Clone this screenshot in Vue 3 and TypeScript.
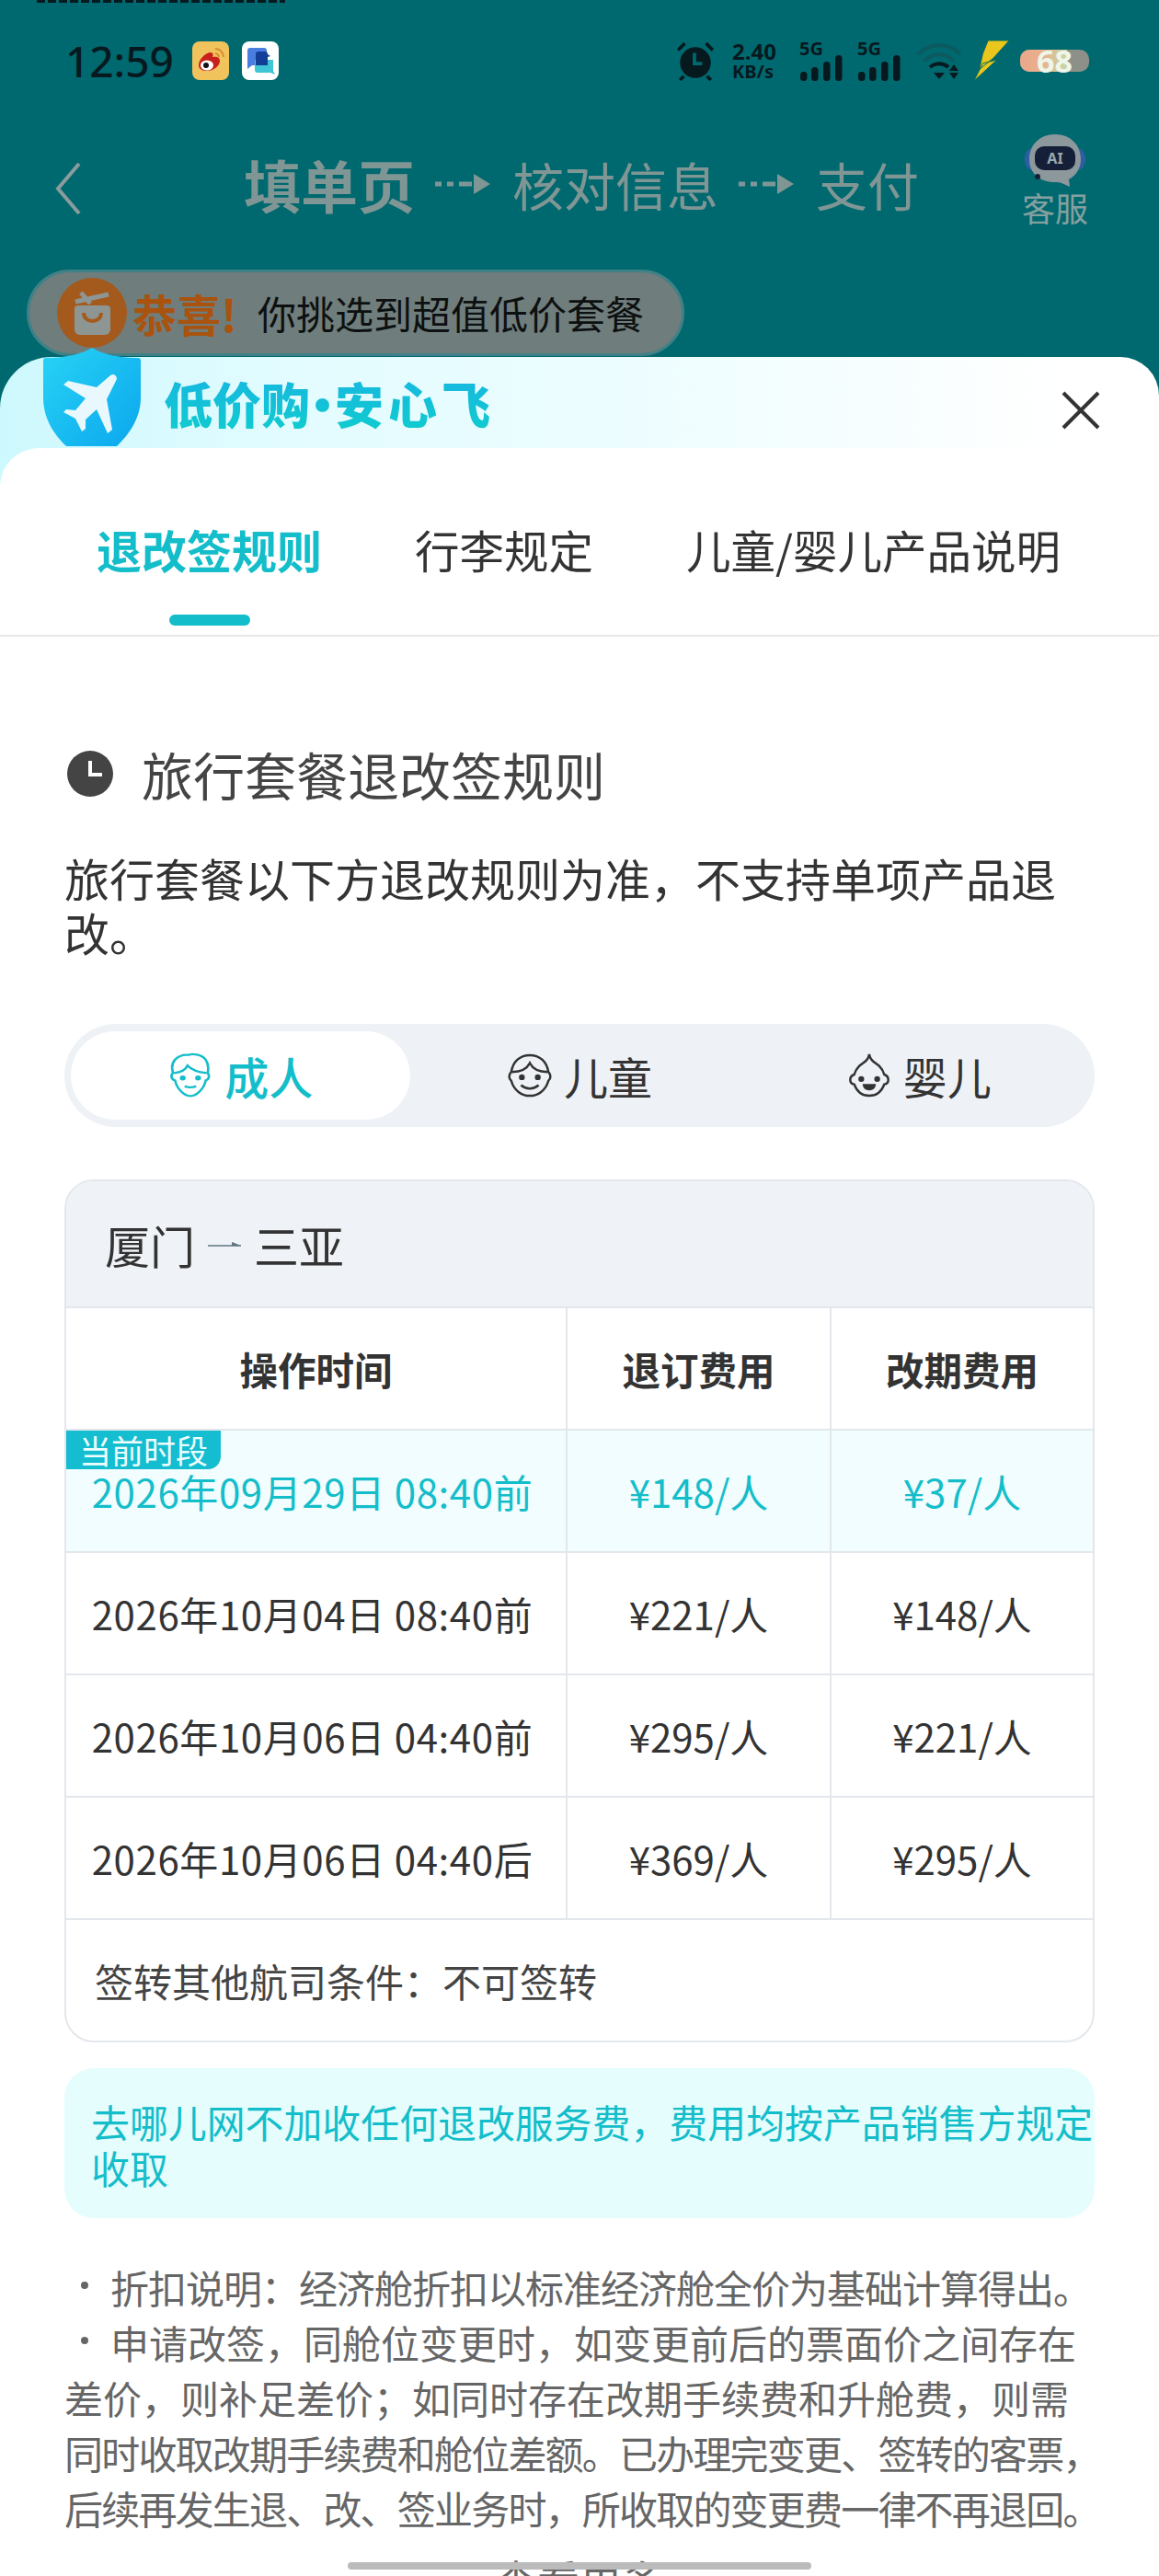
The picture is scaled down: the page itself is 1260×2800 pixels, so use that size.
<template>
  <div class="page">
    <div class="dim">
      <div class="sliver"></div>
      <div class="status">
        <span class="clock">12:59</span>
        <svg class="app-icon" viewBox="0 0 40 42">
          <rect width="40" height="42" rx="8" fill="#f0c35c" />
          <path d="M7 26c0-7 8-14 13-14 3 0 3 3 2 5 4-1 8 0 8 4 0 6-7 11-14 11-5 0-9-2-9-6z" fill="#c8201c" />
          <ellipse cx="16" cy="26" rx="7" ry="5.5" fill="#fff" />
          <circle cx="15" cy="26" r="3" fill="#111" />
          <path d="M25 8c5 0 9 4 9 9M25 13c2 0 4 2 4 4" fill="none" stroke="#d98a2c" stroke-width="2" />
        </svg>
        <svg class="app-icon" viewBox="0 0 40 42">
          <rect width="40" height="42" rx="8" fill="#fff" />
          <path d="M6 10a3 3 0 0 1 3-3h15a3 3 0 0 1 3 3v16H11l-5 4z" fill="#4a7de0" />
          <path d="M14 20h20v12l2 4-5-2H17a3 3 0 0 1-3-3z" fill="#3fc6d4" />
          <path d="M15 14a3 3 0 0 1 3-3h7a3 3 0 0 1 3 3l3 2-3 1v9H15z" fill="#123f95" />
        </svg>
        <div class="status-right">
          <svg class="alarm" viewBox="0 0 42 42">
            <path d="M3 10l7-7M39 10l-7-7M9 37l-4 4M33 37l4 4" stroke="#06191f" stroke-width="3.5" fill="none" />
            <circle cx="21" cy="23" r="16" fill="#06191f" />
            <path d="M20 13v11h8" stroke="#00696f" stroke-width="3.5" fill="none" />
          </svg>
          <div class="speed"><span>2.40</span><span class="unit">KB/s</span></div>
          <div v-for="sim in 2" :key="sim" class="signal">
            <span class="five-g">5G</span>
            <svg viewBox="0 0 50 28">
              <rect x="1" y="18" width="7.5" height="10" rx="3.5" />
              <rect x="13" y="13" width="7.5" height="15" rx="3.5" />
              <rect x="26" y="7" width="7.5" height="21" rx="3.5" />
              <rect x="39" y="0" width="7.5" height="28" rx="3.5" />
            </svg>
          </div>
          <svg class="wifi" viewBox="0 0 54 42">
            <path d="M3 14c13-13 33-13 46 0M10 21c9-9 23-9 32 0" fill="none" stroke="#0a5a60" stroke-width="4" />
            <path d="M16 28c6-5 14-5 20 0" fill="none" stroke="#06191f" stroke-width="4" />
            <path d="M20 34h12l-6 7z" fill="#06191f" />
            <path d="M42 25l5 7H37zM37 34h10l-5 7z" fill="#06191f" />
          </svg>
          <svg class="bolt" viewBox="0 0 40 46">
            <path d="M16 0h24L22 20l-16 13 4-18zM10 26l16-4L0 46z" fill="#e9c71c" stroke="#0a6a5e" stroke-width="1" />
          </svg>
          <div class="battery"><span class="battery-level"></span><span class="battery-num">68</span></div>
        </div>
      </div>

      <div class="nav">
        <svg class="back" viewBox="0 0 30 58">
          <polyline points="27,2 4,29 27,56" fill="none" stroke="#8b9c9c" stroke-width="4" />
        </svg>
        <div class="steps">
          <span class="step-main">填单页</span>
          <svg class="flow" viewBox="0 0 62 24">
            <path d="M0 12h7M13 12h7M26 12h14" stroke="#7f9695" stroke-width="5" />
            <path d="M42 1l18 11-18 11z" fill="#7f9695" />
          </svg>
          <span class="step">核对信息</span>
          <svg class="flow" viewBox="0 0 62 24">
            <path d="M0 12h7M13 12h7M26 12h14" stroke="#7f9695" stroke-width="5" />
            <path d="M42 1l18 11-18 11z" fill="#7f9695" />
          </svg>
          <span class="step">支付</span>
        </div>
        <div class="service">
          <svg viewBox="0 0 68 58">
            <path d="M1 28c0-6 3-11 7-12v24c-4-1-7-6-7-12zM67 28c0-6-3-11-7-12v24c4-1 7-6 7-12z" fill="#2f5da3" />
            <path d="M34 1C17 1 6 13 6 28s11 25 28 25c3 0 5 0 7 1l9 4-1-8c9-5 13-13 13-22C62 13 51 1 34 1z" fill="#8d989c" />
            <rect x="12" y="14" width="44" height="26" rx="10" fill="#152038" />
            <text x="34" y="33" text-anchor="middle" class="ai-text">AI</text>
            <circle cx="15" cy="47" r="3" fill="#152038" />
          </svg>
          <span>客服</span>
        </div>
      </div>

      <div class="promo">
        <svg class="promo-icon" viewBox="0 0 76 76">
          <circle cx="38" cy="38" r="38" fill="#a45a1d" />
          <path d="M19 34a4 4 0 0 1 4-4h31a4 4 0 0 1 4 4v22a6 6 0 0 1-6 6H25a6 6 0 0 1-6-6z" fill="#8e9694" />
          <path d="M20 26l36-8M26 16l10 12" stroke="#8e9694" stroke-width="5" fill="none" />
          <path d="M29 38c0 12 19 12 19 0" stroke="#a45a1d" stroke-width="4" fill="none" />
        </svg>
        <span class="promo-hi">恭喜!</span>
        <span class="promo-text">你挑选到超值低价套餐</span>
      </div>
    </div>

    <div class="sheet">
      <svg class="shield" viewBox="0 0 106 107">
        <defs>
          <linearGradient id="shieldFill" x1="0" y1="0" x2="1" y2="1">
            <stop offset="0" stop-color="#27d3f4" />
            <stop offset="1" stop-color="#0aa5ee" />
          </linearGradient>
        </defs>
        <path d="M53 0c12 7 28 11 50 11 2 0 3 1 3 3v40c0 30-22 50-36 62H36C20 104 0 84 0 54V14c0-2 1-3 3-3C25 11 41 7 53 0z" fill="url(#shieldFill)" />
        <path d="M79 36c3-4-2-9-6-6L58 43 27 36l-5 4 24 15-11 13-10-1-3 3 13 7 7 14 4-3v-10l12-11 12 26 5-4-6-33z" fill="#e9f8fd" />
      </svg>
      <div class="sheet-head">
        <span class="brand">低价购<span class="brand-dot">·</span><span class="brand-end">安心飞</span></span>
        <svg class="close" viewBox="0 0 42 42">
          <path d="M2 2l38 38M40 2L2 40" stroke="#333" stroke-width="4" fill="none" />
        </svg>
      </div>

      <div class="sheet-body">
        <div class="tabs">
          <div v-for="tab in tabs" :key="tab" :class="['tab', { active: tab === '退改签规则' }]">
            <span>{{ tab }}</span>
            <i></i>
          </div>
        </div>

        <div class="content">
          <h2 class="heading">
            <svg viewBox="0 0 50 50">
              <circle cx="25" cy="25" r="25" fill="#444" />
              <path d="M25 11v15h13" fill="none" stroke="#fff" stroke-width="4" />
            </svg>
            旅行套餐退改签规则
          </h2>
          <p class="lead">旅行套餐以下方退改规则为准，不支持单项产品退改。</p>

          <div class="segment">
            <div class="seg active">
              <svg viewBox="0 0 48 56" preserveAspectRatio="none" fill="none" stroke="currentColor" stroke-width="2.6">
                <path d="M6 25C2 12 10 2 22 3c4-2 14-1 18 6 3 5 3 11 2 16 2 2 2 8-2 9-2 11-10 19-16 19S10 45 8 34c-4-1-5-7-2-9z" />
                <path d="M7 25c8-1 12-4 14-9 4 5 11 8 20 9" />
                <circle cx="16" cy="31" r="1.8" fill="currentColor" />
                <circle cx="32" cy="31" r="1.8" fill="currentColor" />
                <path d="M18 41c4 2 8 2 12 0" />
              </svg>
              <span>成人</span>
            </div>
            <div class="seg">
              <svg viewBox="0 0 52 52" fill="none" stroke="currentColor" stroke-width="2.6">
                <path d="M5 22C7 10 15 3 26 3s19 7 21 19c3 3 3 8 0 10-3 11-12 17-21 17S8 43 5 32c-3-2-3-7 0-10z" />
                <path d="M6 22c10 0 17-4 20-10 3 6 10 10 20 10" />
                <circle cx="17" cy="28" r="2" fill="currentColor" />
                <circle cx="35" cy="28" r="2" fill="currentColor" />
                <path d="M16 37c6 5 14 5 20 0" />
              </svg>
              <span>儿童</span>
            </div>
            <div class="seg">
              <svg viewBox="0 0 52 52" fill="none" stroke="currentColor" stroke-width="2.6">
                <path d="M26 2c1 7 6 9 11 13 3 3 5 6 6 10 6 2 6 10 0 11-3 8-9 13-17 13S12 44 9 36c-6-1-6-9 0-11 1-4 3-7 6-10 5-4 10-6 11-13z" />
                <circle cx="17" cy="30" r="2" fill="currentColor" />
                <circle cx="35" cy="30" r="2" fill="currentColor" />
                <path d="M20 37h12c-1 6-11 6-12 0z" fill="currentColor" />
              </svg>
              <span>婴儿</span>
            </div>
          </div>

          <div class="table">
            <div class="route">
              厦门
              <svg viewBox="0 0 36 10">
                <path d="M0 5h36" stroke="#5f7480" stroke-width="1.5" />
                <path d="M26 1l10 4H26z" fill="#5f7480" />
              </svg>
              三亚
            </div>
            <div class="row head">
              <div>操作时间</div>
              <div>退订费用</div>
              <div>改期费用</div>
            </div>
            <div v-for="(row, i) in rows" :key="row.time" :class="['row', { current: i === 0 }]">
              <div class="time-cell">
                <span v-if="i === 0" class="tag">当前时段</span>
                <span>{{ row.time }}</span>
              </div>
              <div>{{ row.refund }}</div>
              <div>{{ row.change }}</div>
            </div>
            <div class="endorse">签转其他航司条件：不可签转</div>
          </div>

          <div class="note">去哪儿网不加收任何退改服务费，费用均按产品销售方规定收取</div>

          <div class="rules">
            <p class="bullet narrow">折扣说明：经济舱折扣以标准经济舱全价为基础计算得出。</p>
            <p class="bullet">申请改签，同舱位变更时，如变更前后的票面价之间存在</p>
            <p>差价，则补足差价；如同时存在改期手续费和升舱费，则需</p>
            <p class="tight">同时收取改期手续费和舱位差额。已办理完变更、签转的客票，</p>
            <p class="tight">后续再发生退、改、签业务时，所收取的变更费一律不再退回。</p>
          </div>
          <div class="more">查看更多</div>
        </div>
      </div>
    </div>
    <div class="scrollbar"></div>
  </div>
</template>

<script setup lang="ts">
const tabs: string[] = ['退改签规则', '行李规定', '儿童/婴儿产品说明']

const rows: { time: string; refund: string; change: string }[] = [
  { time: '2026年09月29日 08:40前', refund: '¥148/人', change: '¥37/人' },
  { time: '2026年10月04日 08:40前', refund: '¥221/人', change: '¥148/人' },
  { time: '2026年10月06日 04:40前', refund: '¥295/人', change: '¥221/人' },
  { time: '2026年10月06日 04:40后', refund: '¥369/人', change: '¥295/人' },
]
</script>

<style>
html, body { margin: 0; background: #fff; }
</style>

<style scoped>
.page { position: relative; width: 1260px; height: 2800px; overflow: hidden; background: #00696f; font-family: "Noto Sans CJK SC", "Noto Sans", sans-serif; color: #333; }
.dim { height: 388px; display: flex; flex-direction: column; }
.sliver { height: 3px; margin-left: 40px; flex: none; width: 270px; background: repeating-linear-gradient(90deg, #06191f 0 9px, transparent 9px 12px); }
.status { display: flex; align-items: center; height: 126px; flex: none; padding-left: 71px; }
.clock { font-family: "Noto Sans", sans-serif; font-weight: 500; font-size: 46px; color: #06191f; width: 138px; line-height: 1; }
.app-icon { width: 40px; height: 42px; margin-right: 14px; }
.status-right { margin-left: auto; padding-right: 76px; display: flex; align-items: center; height: 44px; }
.alarm { width: 44px; height: 44px; margin-right: 18px; }
.speed { display: flex; flex-direction: column; font-family: "Noto Sans", sans-serif; font-weight: 700; color: #06191f; font-size: 24px; line-height: 24px; width: 56px; margin-right: 17px; }
.speed .unit { font-size: 20px; line-height: 20px; }
.signal { position: relative; width: 50px; height: 44px; margin-right: 13px; }
.signal svg { position: absolute; left: 0; bottom: 0; width: 50px; height: 28px; fill: #06191f; }
.five-g { position: absolute; left: 0; top: -1px; font-family: "Noto Sans", sans-serif; font-size: 20px; line-height: 20px; font-weight: 700; color: #06191f; }
.wifi { width: 54px; height: 42px; margin-right: 9px; }
.bolt { width: 40px; height: 44px; margin-right: 11px; }
.battery { position: relative; width: 75px; height: 24px; border-radius: 10px; background: #8d9088; display: flex; justify-content: center; align-items: center; }
.battery-level { position: absolute; left: 0; top: 0; bottom: 0; width: 51px; border-radius: 10px 0 0 10px; background: linear-gradient(90deg, #eba78c, #e9b08c 45%, #c7d6a5); }
.battery-num { position: relative; font-family: "Noto Sans", sans-serif; font-size: 34px; font-weight: 700; color: #eef6ea; line-height: 24px; }

.nav { position: relative; flex: none; height: 130px; display: flex; align-items: center; justify-content: center; }
.back { position: absolute; left: 59px; top: 47px; width: 30px; height: 58px; }
.steps { display: flex; align-items: center; gap: 22px; margin-top: 12px; color: #7f9695; transform: translateX(2px); }
.step-main { font-size: 62px; font-weight: 700; line-height: 70px; }
.step { font-size: 56px; line-height: 70px; }
.flow { width: 62px; height: 24px; }
.service { position: absolute; right: 77px; top: 16px; width: 72px; display: flex; flex-direction: column; align-items: center; color: #84a0a0; font-size: 36px; line-height: 44px; }
.service svg { width: 68px; height: 58px; flex: none; }
.ai-text { font-family: "Noto Sans", sans-serif; font-size: 16px; font-weight: 700; fill: #9aa7ad; }

.promo { flex: none; box-sizing: border-box; width: 715px; height: 94px; margin: 34px 0 0 29px; display: flex; align-items: center; padding-left: 30px; border-radius: 47px; background: #6f7d7c; border: 3px solid #3f8186; }
.promo-icon { width: 76px; height: 76px; flex: none; margin-right: 6px; }
.promo-hi { color: #a9530f; font-size: 48px; font-weight: 700; width: 136px; line-height: 60px; white-space: nowrap; }
.promo-text { color: #0d1010; font-size: 42px; line-height: 60px; white-space: nowrap; }

.sheet { position: relative; height: 2412px; border-radius: 56px 42px 0 0; background: linear-gradient(90deg, #cdf8fd 0%, #e3fcff 25%, #edfdff 55%, #fff 92%); }
.shield { position: absolute; left: 47px; top: -10px; width: 106px; height: 107px; }
.sheet-head { height: 99px; position: relative; display: flex; align-items: center; justify-content: space-between; padding: 0 64px 0 178px; box-sizing: border-box; }
.brand { font-size: 53px; font-weight: 900; line-height: 60px; background: linear-gradient(180deg, #17b7e0, #10cbcf); -webkit-background-clip: text; background-clip: text; color: transparent; white-space: nowrap; }
.brand-dot { margin: 0 -13px; }
.brand-end { letter-spacing: 5px; }
.close { width: 42px; height: 42px; margin-top: 16px; }
.sheet-body { height: 2313px; background: #fff; border-radius: 42px 0 0 0; overflow: hidden; }

.tabs { display: flex; gap: 101px; height: 205px; box-sizing: border-box; padding: 80px 0 0 105px; border-bottom: 2px solid #e8e8e8; }
.tab { display: flex; flex-direction: column; align-items: center; font-size: 48.5px; line-height: 60px; color: #333; white-space: nowrap; }
.tab i { display: block; width: 88px; height: 12px; margin-top: 41px; border-radius: 6px; }
.tab.active { color: #14bdca; font-weight: 700; font-size: 49px; }
.tab.active i { background: #14bdca; }

.content { padding: 0 70px; }
.heading { margin: 118px 0 0 3px; display: flex; align-items: center; gap: 31px; font-size: 56px; line-height: 62px; font-weight: 400; color: #444; white-space: nowrap; }
.heading svg { width: 50px; height: 50px; flex: none; }
.lead { margin: 52px 0 0; font-size: 49px; line-height: 59px; color: #333; }

.segment { margin-top: 71px; height: 112px; box-sizing: border-box; padding: 8px 7px; border-radius: 56px; background: #eef1f5; display: grid; grid-template-columns: repeat(3, 1fr); }
.seg { display: flex; align-items: center; justify-content: center; gap: 12px; font-size: 48px; line-height: 60px; color: #333; border-radius: 48px; }
.seg svg { width: 50px; height: 50px; }
.seg.active { background: #fff; color: #14bdca; font-weight: 500; }

.table { margin-top: 57px; box-sizing: border-box; height: 938px; border: 2px solid #e3e7ec; border-radius: 32px; overflow: hidden; }
.route { height: 138px; box-sizing: border-box; border-bottom: 2px solid #e3e7ec; background: #eff2f6; display: flex; align-items: center; padding-left: 42px; gap: 14px; font-size: 49px; color: #333; }
.route svg { width: 36px; height: 10px; margin-top: 4px; }
.row { display: grid; grid-template-columns: 545px 287px 1fr; height: 133px; border-bottom: 2px solid #e3e7ec; box-sizing: border-box; font-size: 42px; }
.row > div { display: flex; align-items: center; justify-content: center; white-space: pre; border-right: 2px solid #e3e7ec; }
.row > div:last-child { border-right: 0; }
.row.head { font-weight: 700; font-size: 41.5px; }
.row.current { background: #f1fdfe; color: #14bdca; }
.time-cell { position: relative; letter-spacing: 0.6px; padding-right: 8px; }
.tag { position: absolute; left: 0; top: 0; width: 168px; height: 42px; border-radius: 0 0 14px 0; background: #14bdd0; color: #eefdfe; font-size: 35px; line-height: 42px; text-align: center; letter-spacing: 0; }
.endorse { height: 130px; display: flex; align-items: center; padding-left: 31px; font-size: 42px; color: #444; }

.note { margin-top: 28px; height: 163px; box-sizing: border-box; padding: 33px 0 0 29px; border-radius: 32px; background: #e6fdfd; color: #14bdca; font-size: 41.9px; line-height: 50px; }

.rules { margin-top: 45px; color: #666; font-size: 42px; }
.rules p { margin: 0; height: 60px; line-height: 60px; white-space: nowrap; }
.bullet { position: relative; padding-left: 50px; }
.bullet::before { content: ""; position: absolute; left: 18px; top: 24px; width: 8px; height: 8px; border-radius: 50%; background: #666; }
.bullet.narrow { letter-spacing: -1px; }
.tight { letter-spacing: -1.8px; }
.more { margin-top: 21px; text-align: center; font-size: 46px; line-height: 50px; color: #666; }
.scrollbar { position: absolute; left: 378px; top: 2785px; width: 504px; height: 8px; border-radius: 4px; background: #bbb; }
</style>
